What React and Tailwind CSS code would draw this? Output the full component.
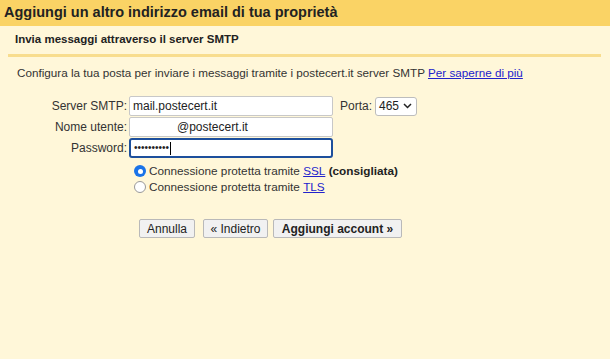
export default function App() {
  const font = { fontFamily: '"Liberation Sans", Arial, sans-serif' };
  return (
    <div className="w-[610px] h-[359px] bg-[#fff7d9] overflow-hidden text-[#222]" style={font}>
      <div className="h-[26px] bg-[#fad365] flex items-center pl-[4px]">
        <span className="text-[14.5px] font-bold text-[#222]">Aggiungi un altro indirizzo email di tua proprietà</span>
      </div>
      <div className="mx-[8px] mr-[9px] border-b-[3px] border-[#f8dd8e] h-[31px] flex items-center pl-[7px]">
        <span className="text-[11.5px] font-bold">Invia messaggi attraverso il server SMTP</span>
      </div>
      <div className="pl-[17px] pt-[8px] text-[11.7px] text-[#333] leading-[16px]">
        Configura la tua posta per inviare i messaggi tramite i postecert.it server SMTP{' '}
        <a className="text-[#2222cc] underline">Per saperne di più</a>
      </div>
      <div className="mt-[15px] flex flex-col gap-[1px] text-[12px] text-[#333]">
        <div className="flex items-center h-[20px]">
          <div className="w-[129px] shrink-0 text-right pr-[2px]">Server SMTP:</div>
          <div className="w-[204px] h-[20px] bg-white border border-[#c8c8c8] rounded-[2px] flex items-center pl-[3px] text-[#222]">mail.postecert.it</div>
          <div className="ml-[7px]">Porta:</div>
          <div className="ml-[3px] w-[42px] h-[19px] bg-white border border-[#bdbdbd] rounded-[3px] flex items-center pl-[3px] text-[#222]">
            465
            <svg width="9" height="6" viewBox="0 0 9 6" className="ml-[4px]"><path d="M1 1l3.5 3.5L8 1" fill="none" stroke="#222" strokeWidth="1.5" /></svg>
          </div>
        </div>
        <div className="flex items-center h-[20px]">
          <div className="w-[129px] shrink-0 text-right pr-[2px]">Nome utente:</div>
          <div className="w-[204px] h-[20px] bg-white border border-[#c8c8c8] rounded-[2px] flex items-center pl-[47px] text-[#222]">@postecert.it</div>
        </div>
        <div className="flex items-center h-[20px]">
          <div className="w-[129px] shrink-0 text-right pr-[2px]">Password:</div>
          <div className="w-[204px] h-[20px] bg-white border-2 border-[#1d4f9c] rounded-[3px] flex items-center pl-[3px] text-[#222]">
            <span className="text-[10px] leading-none">••••••••••</span>
            <span className="w-px h-[13px] bg-black ml-[1px]" />
          </div>
        </div>
      </div>
      <div className="ml-[134px] mt-[5px] flex flex-col text-[11.75px] text-[#333]">
        <div className="flex items-center h-[16px]">
          <span className="w-[12px] h-[12px] rounded-full bg-[#1a73e8] flex items-center justify-center mr-[3px]">
            <span className="w-[5px] h-[5px] rounded-full bg-white" />
          </span>
          Connessione protetta tramite&nbsp;<a className="text-[#2222cc] underline">SSL</a>&nbsp;<b className="text-[#222]">(consigliata)</b>
        </div>
        <div className="flex items-center h-[16px]">
          <span className="w-[12px] h-[12px] rounded-full bg-white border border-[#999] mr-[3px]" />
          Connessione protetta tramite&nbsp;<a className="text-[#2222cc] underline">TLS</a>
        </div>
      </div>
      <div className="ml-[139px] mt-[24px] flex items-center text-[12px] text-[#222]">
        <button className="w-[56px] h-[19px] bg-[#f1f1f1] border border-[#b9b9b9] rounded-[2px] flex items-center justify-center">Annulla</button>
        <button className="ml-[8px] w-[65px] h-[19px] bg-[#f1f1f1] border border-[#b9b9b9] rounded-[2px] flex items-center justify-center">« Indietro</button>
        <button className="ml-[5px] w-[129px] h-[19px] bg-[#f1f1f1] border border-[#b9b9b9] rounded-[2px] flex items-center justify-center font-bold">Aggiungi account »</button>
      </div>
    </div>
  );
}
